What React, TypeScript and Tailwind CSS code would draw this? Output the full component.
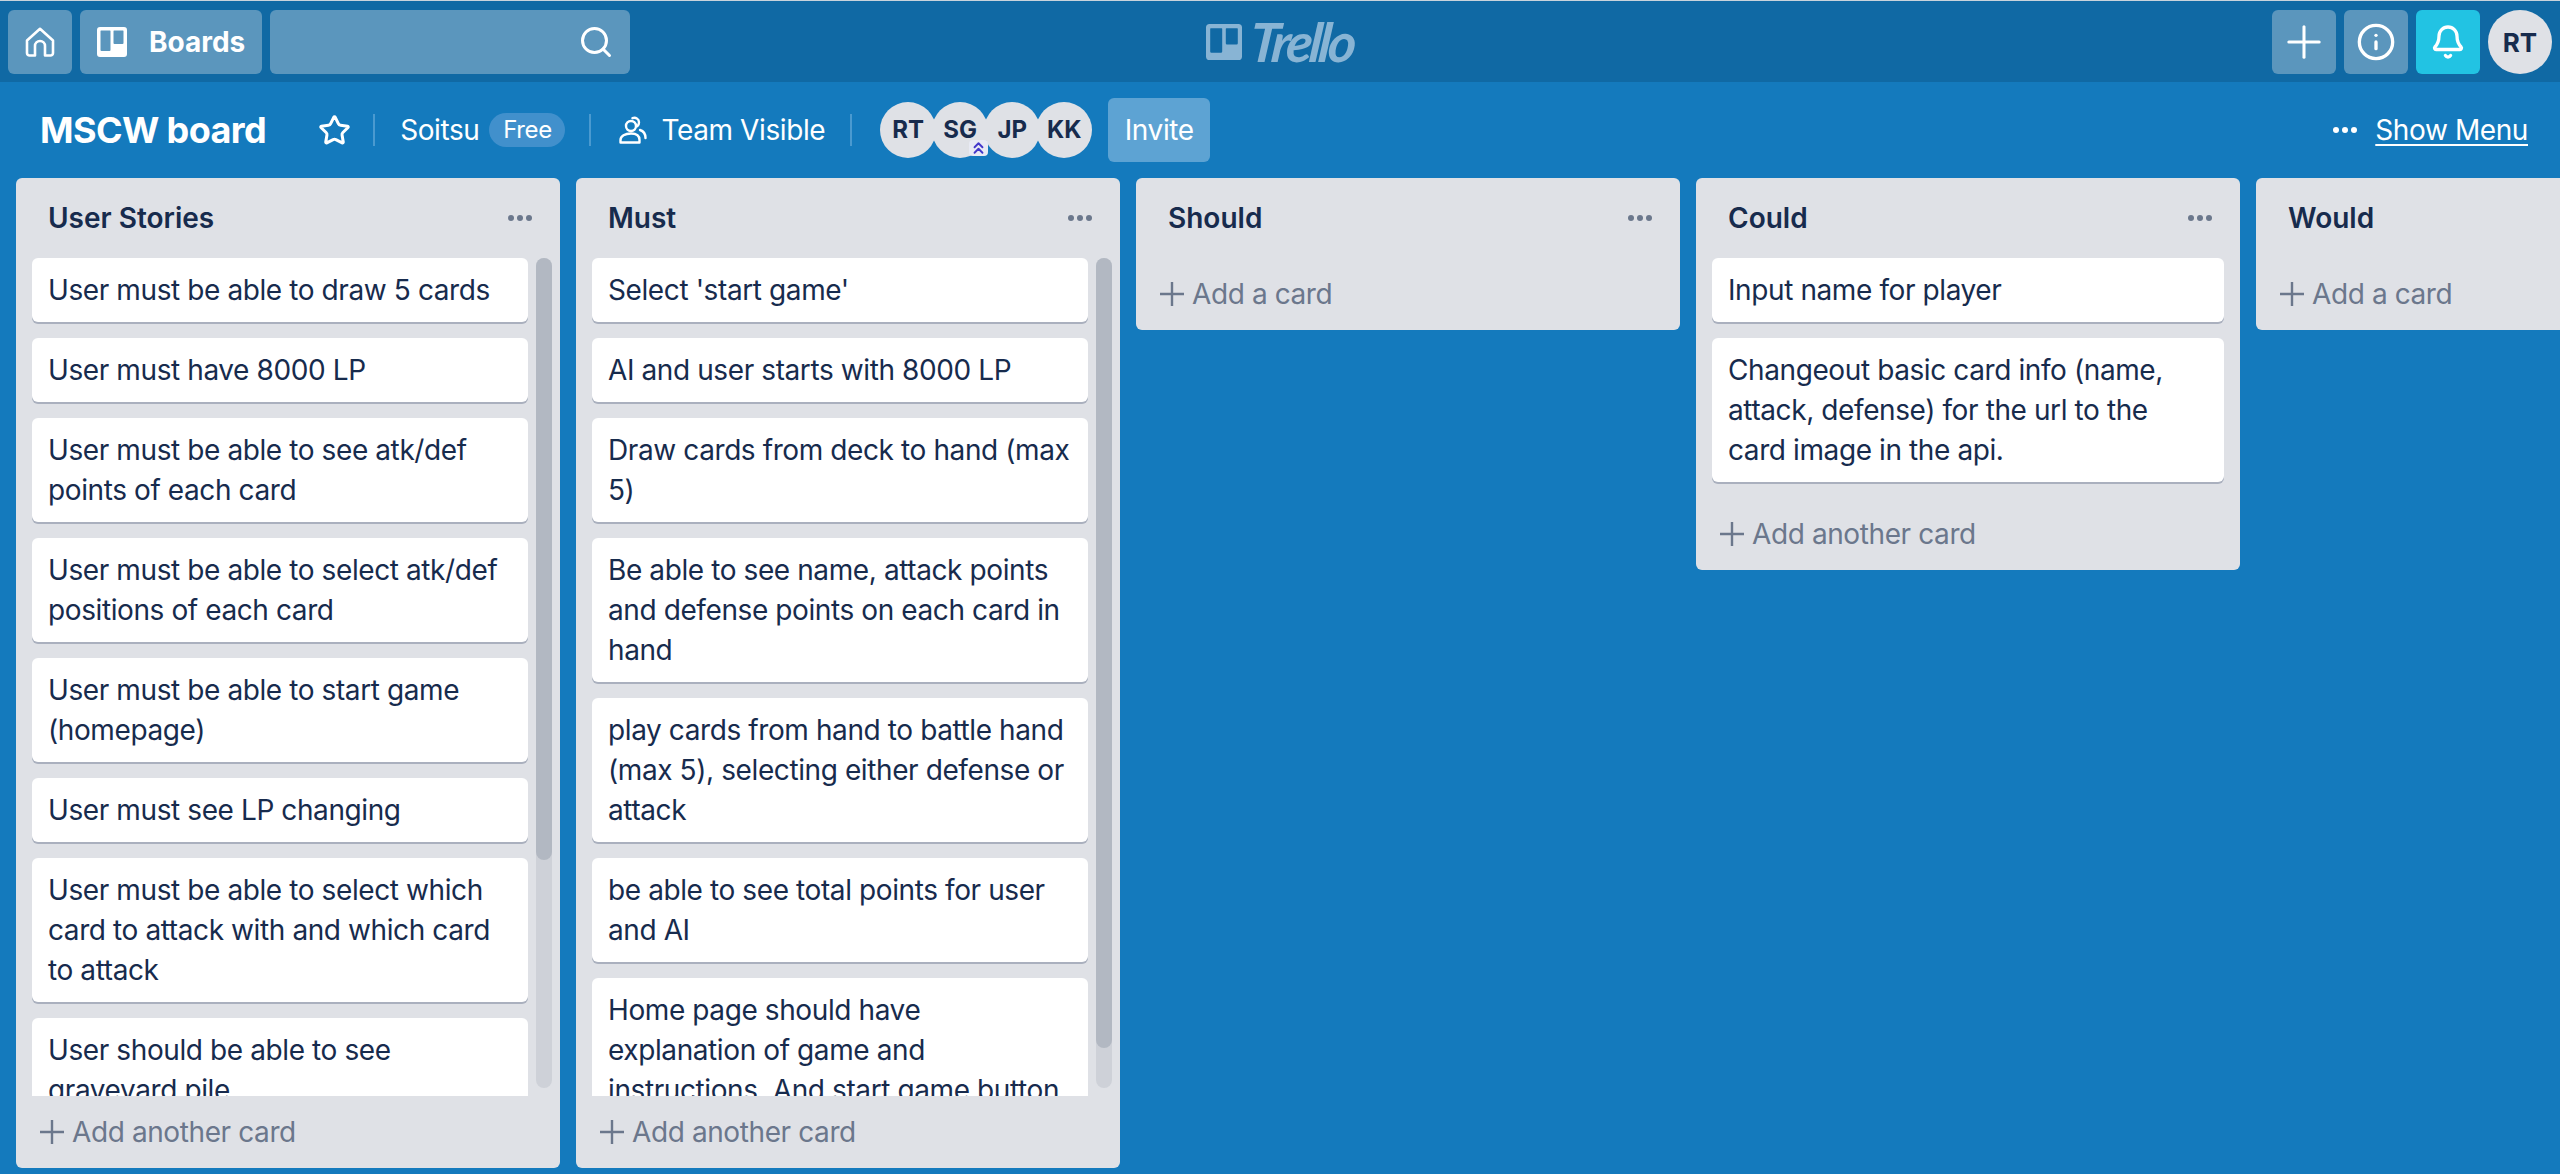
import React from "react";
import { ChevronsUp, Info, Bell, Plus, Search, Star } from "lucide-react";

const font = { fontFamily: "Inter, 'Noto Sans', sans-serif" };

const BoardsIcon = ({ className }: { className?: string }) => (
  <svg viewBox="0 0 30 30" className={className} fill="currentColor">
    <path
      fillRule="evenodd"
      d="M3 0h24a3 3 0 0 1 3 3v24a3 3 0 0 1-3 3H3a3 3 0 0 1-3-3V3a3 3 0 0 1 3-3zM4 3.5a.5.5 0 0 0-.5.5v19a1 1 0 0 0 1 1h8a1 1 0 0 0 1-1V4a.5.5 0 0 0-.5-.5zM17 3.5a.5.5 0 0 0-.5.5v12a1 1 0 0 0 1 1h8a1 1 0 0 0 1-1V4a.5.5 0 0 0-.5-.5z"
    />
  </svg>
);

const HomeIcon = () => (
  <svg viewBox="0 0 30 30" className="w-[30px] h-[30px]" fill="none" stroke="white" strokeWidth="2.6" strokeLinejoin="round">
    <path d="M15 1.8 2 13.5V26a2.5 2.5 0 0 0 2.5 2.5H10V19a5 5 0 0 1 10 0v9.5h5.5A2.5 2.5 0 0 0 28 26V13.5z" />
  </svg>
);

const TeamIcon = () => (
  <svg viewBox="0 0 28 28" className="w-[28px] h-[28px]" fill="none" stroke="white" strokeWidth="2.4" strokeLinecap="round" strokeLinejoin="round">
    <circle cx="12" cy="10" r="5" />
    <path d="M1.5 26.5v-2.5c0-4 4.5-6.5 10.500-6.500s8.500 2.500 8.500 6.500v2.500z" />
    <path d="M13.5 2.2c3-1.200 6.500.5 6.500 4 0 1.600-.5 3-1.600 4" />
    <path d="M21 14c3 1 5.500 3.500 5.500 8" />
  </svg>
);

const NavButton = ({ children, className = "bg-[#5b96bd]" }: { children: React.ReactNode; className?: string }) => (
  <div className={`flex items-center justify-center h-16 w-16 rounded-md ${className}`}>{children}</div>
);

const Avatar = ({ text, className = "" }: { text: string; className?: string }) => (
  <div className={`flex-none flex items-center justify-center rounded-full bg-[#dfe1e6] text-[#172b4d] font-bold ${className}`}>
    {text}
  </div>
);

const Separator = () => <div className="w-0.5 h-8 bg-[#4a9ad0]" />;

const Dots = () => (
  <div className="flex gap-[3px]">
    <div className="w-1.5 h-1.5 rounded-full bg-[#6b778c]" />
    <div className="w-1.5 h-1.5 rounded-full bg-[#6b778c]" />
    <div className="w-1.5 h-1.5 rounded-full bg-[#6b778c]" />
  </div>
);

const Card = ({ text }: { text: string }) => (
  <div className="flex-none bg-white rounded-md px-4 py-3 text-[28px] leading-10 tracking-[-0.4px] text-[#172b4d] shadow-[0_2px_0_#aab0be]">
    {text}
  </div>
);

const AddCard = ({ label }: { label: string }) => (
  <div className="flex items-center h-[72px] pl-[24px] pb-px text-[28px] tracking-[-0.4px] text-[#6b778c]">
    <svg viewBox="0 0 24 24" className="w-6 h-6 mr-2" stroke="#6b778c" strokeWidth="2.4">
      <path d="M12 0v24M0 12h24" />
    </svg>
    {label}
  </div>
);

type ListProps = {
  title: string;
  cards?: string[];
  add?: string;
  scroll?: number;
};

const List = ({ title, cards = [], add = "Add another card", scroll }: ListProps) => (
  <div className="flex-none flex flex-col w-[544px] bg-[#dfe1e6] rounded-md">
    <div className="flex items-center justify-between h-20 pl-8 pr-[28px]">
      <div className="text-[28px] font-semibold text-[#172b4d]">{title}</div>
      <Dots />
    </div>
    {scroll ? (
      <div className="flex gap-2 h-[838px] pl-4 pr-2">
        <div className="flex flex-col gap-4 w-[496px] overflow-hidden">
          {cards.map((c) => (
            <Card key={c} text={c} />
          ))}
        </div>
        <div className="flex-none w-4 h-[830px] rounded-lg bg-[#ced1d8]">
          <div className="w-4 rounded-lg bg-[#b2b8c2]" style={{ height: scroll }} />
        </div>
      </div>
    ) : (
      cards.length > 0 && (
        <div className="flex flex-col gap-4 px-4 pb-4">
          {cards.map((c) => (
            <Card key={c} text={c} />
          ))}
        </div>
      )
    )}
    <AddCard label={add} />
  </div>
);

const App = () => {
  return (
    <div className="w-[2560px] h-[1174px] overflow-hidden flex flex-col bg-[#147abd]" style={font}>
      {/* Top nav */}
      <div className="flex-none flex items-start h-[82px] pt-[9px] px-2 bg-[#1069a4] border-t border-[#c9d3dc]">
        <div className="flex-1 flex gap-2">
          <NavButton>
            <HomeIcon />
          </NavButton>
          <div className="flex items-center h-16 w-[182px] pl-[17px] rounded-md bg-[#5b96bd] text-white">
            <BoardsIcon className="w-[30px] h-[30px] text-white" />
            <span className="ml-[22px] text-[28px] font-bold">Boards</span>
          </div>
          <div className="flex items-center justify-end h-16 w-[360px] pr-4 rounded-md bg-[#5b96bd]">
            <Search size={36} color="white" strokeWidth={2} />
          </div>
        </div>
        <div className="flex items-center h-16 text-[#88b4d4]">
          <BoardsIcon className="w-9 h-9" />
          <span
            className="inline-block ml-2 text-[54px] leading-none font-bold italic tracking-[-3.5px] -skew-x-6"
            style={{ fontFamily: "Lato, sans-serif" }}
          >
            Trello
          </span>
        </div>
        <div className="flex-1 flex justify-end gap-2">
          <NavButton>
            <Plus size={52} color="white" strokeWidth={1.4} />
          </NavButton>
          <NavButton>
            <Info size={40} color="white" strokeWidth={2} />
          </NavButton>
          <NavButton className="bg-[#22c3e3]">
            <Bell size={36} color="white" strokeWidth={2.2} />
          </NavButton>
          <Avatar text="RT" className="w-16 h-16 text-[26px]" />
        </div>
      </div>

      {/* Board header */}
      <div className="flex-none flex items-center h-24 pl-10 pr-8 text-[28px] tracking-[-0.4px] text-white">
        <div className="text-[36px] font-bold tracking-[-0.6px]">MSCW board</div>
        <div className="ml-[52px]">
          <Star size={33} color="white" strokeWidth={2.2} />
        </div>
        <div className="ml-[22px]">
          <Separator />
        </div>
        <div className="ml-[25px]">Soitsu</div>
        <div className="ml-[10px] flex items-center justify-center w-[76px] h-[34px] rounded-full bg-[#4190cc] text-[24px]">Free</div>
        <div className="ml-6">
          <Separator />
        </div>
        <div className="ml-[28px]">
          <TeamIcon />
        </div>
        <div className="ml-[14px]">Team Visible</div>
        <div className="ml-[25px]">
          <Separator />
        </div>
        <div className="ml-[28px] flex tracking-normal">
          <Avatar text="RT" className="w-14 h-14 text-[24px]" />
          <div className="relative -ml-1">
            <Avatar text="SG" className="w-14 h-14 text-[24px]" />
            <div className="absolute right-0 bottom-[2px] flex items-center justify-center w-[19px] h-4 rounded-sm bg-[#e8eaf4]">
              <ChevronsUp size={20} color="#4338ca" strokeWidth={2.4} />
            </div>
          </div>
          <Avatar text="JP" className="-ml-1 w-14 h-14 text-[24px]" />
          <Avatar text="KK" className="-ml-1 w-14 h-14 text-[24px]" />
        </div>
        <div className="ml-4 flex items-center justify-center w-[102px] h-16 rounded-md bg-[#5da3d3]">Invite</div>
        <div className="ml-auto flex items-center gap-[18px]">
          <div className="flex gap-[3px]">
            <div className="w-1.5 h-1.5 rounded-full bg-white" />
            <div className="w-1.5 h-1.5 rounded-full bg-white" />
            <div className="w-1.5 h-1.5 rounded-full bg-white" />
          </div>
          <span className="underline underline-offset-4">Show Menu</span>
        </div>
      </div>

      {/* Lists */}
      <div className="flex-1 flex items-start gap-4 pl-4 overflow-hidden">
        <List
          title="User Stories"
          scroll={602}
          cards={[
            "User must be able to draw 5 cards",
            "User must have 8000 LP",
            "User must be able to see atk/def points of each card",
            "User must be able to select atk/def positions of each card",
            "User must be able to start game (homepage)",
            "User must see LP changing",
            "User must be able to select which card to attack with and which card to attack",
            "User should be able to see graveyard pile",
          ]}
        />
        <List
          title="Must"
          scroll={790}
          cards={[
            "Select 'start game'",
            "AI and user starts with 8000 LP",
            "Draw cards from deck to hand (max 5)",
            "Be able to see name, attack points and defense points on each card in hand",
            "play cards from hand to battle hand (max 5), selecting either defense or attack",
            "be able to see total points for user and AI",
            "Home page should have explanation of game and instructions. And start game button",
          ]}
        />
        <List title="Should" add="Add a card" />
        <List
          title="Could"
          cards={["Input name for player", "Changeout basic card info (name, attack, defense) for the url to the card image in the api."]}
        />
        <List title="Would" add="Add a card" />
      </div>
    </div>
  );
};

export default App;
